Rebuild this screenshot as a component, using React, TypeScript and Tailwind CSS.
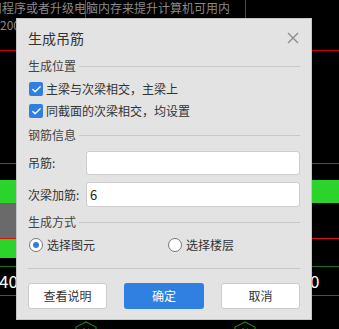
import { Check } from "lucide-react";

const font = { fontFamily: '"Noto Sans CJK SC", "Noto Sans", sans-serif' };

function SectionHeader({ title }: { title: string }) {
  return (
    <div className="flex h-[18px] items-center">
      <span className="text-[12px] text-[#444]">{title}</span>
      <div className="ml-[3px] h-px flex-1 bg-[#c9c9c9]" />
    </div>
  );
}

function CheckRow({ label }: { label: string }) {
  return (
    <div className="flex h-[22px] items-center pl-px">
      <span className="flex h-[14px] w-[14px] items-center justify-center rounded-[2px] bg-[#2f7fe2]">
        <Check className="h-[11px] w-[11px] text-white" strokeWidth={3} />
      </span>
      <span className="ml-[3px] text-[12px] text-[#333]">{label}</span>
    </div>
  );
}

function Radio({ label, checked }: { label: string; checked?: boolean }) {
  return (
    <div className="flex items-center">
      <span className="flex h-[14px] w-[14px] items-center justify-center rounded-full border border-[#777] bg-white">
        {checked && <span className="h-[6px] w-[6px] rounded-full bg-[#2f7fe2]" />}
      </span>
      <span className="ml-[4px] text-[12px] text-[#333]">{label}</span>
    </div>
  );
}

function Field({ label, value, h }: { label: string; value: string; h: string }) {
  return (
    <div className="flex items-center">
      <span className="w-[58px] text-[12px] text-[#333]">{label}</span>
      <div
        className={`flex flex-1 items-center rounded-[3px] border border-[#cdcdcd] bg-white pl-[3px] text-[13px] text-[#222] ${h}`}
      >
        {value}
      </div>
    </div>
  );
}

function Hexagon({ left }: { left: number }) {
  return (
    <svg
      className="absolute top-[321px]"
      style={{ left: left - 12 }}
      width="24"
      height="12"
      viewBox="0 0 24 12"
    >
      <path d="M2 12 L2 6 L12 1 L22 6 L22 12" fill="none" stroke="#1f7a1f" strokeWidth="1.2" />
      <path d="M9 8 h2 M14 8 h1" stroke="#666" strokeWidth="1" />
    </svg>
  );
}

export default function App() {
  return (
    <div className="relative h-[329px] w-[339px] overflow-hidden bg-black" style={font}>
      {/* CAD canvas behind the dialog */}
      <div className="absolute left-[-10px] top-[-1px] whitespace-nowrap text-[12px] text-[#8a8a8a]">
        用程序或者升级电脑内存来提升计算机可用内
      </div>
      <div className="absolute left-0 top-[16px] text-[12px] text-[#8a8a8a]">200</div>
      <div className="absolute left-[85px] top-0 h-[20px] w-px bg-[#d11]" />
      <div className="absolute left-[245px] top-0 h-[20px] w-px bg-[#d11]" />
      <div className="absolute left-0 top-[50px] h-px w-full bg-[#c00]" />
      <div className="absolute left-0 top-[163px] h-px w-full bg-[#d11]" />
      <div className="absolute left-0 top-[180px] h-[23px] w-full bg-[#2bd42b]" />
      <div className="absolute left-0 top-[203px] h-[35px] w-[20px] bg-[#6a6a6a]" />
      <div className="absolute left-0 top-[238px] h-px w-full bg-[#d11]" />
      <div className="absolute left-0 top-[239px] h-[19px] w-[20px] bg-[#2bd42b]" />
      <div className="absolute left-0 top-[266px] h-px w-full bg-[#1c6e1c]" />
      <div className="absolute left-0 top-[295px] h-px w-full bg-[#1c6e1c]" />
      <div className="absolute left-[-1px] top-[268px] text-[17px] text-white">40</div>
      <div className="absolute left-[310px] top-[268px] text-[17px] text-white">0</div>
      <Hexagon left={86} />
      <Hexagon left={245} />

      {/* Dialog */}
      <div className="absolute left-[16px] top-[18px] flex w-[296px] flex-col border border-[#c6c6c6] bg-[#e3e3e3] px-[11px] pb-[10px]">
        <div className="flex h-[38px] items-center justify-between">
          <span className="text-[14px] text-[#333]">生成吊筋</span>
          <svg width="12" height="12" viewBox="0 0 12 12" className="mr-[1px]">
            <path d="M1 1 L11 11 M11 1 L1 11" stroke="#8a8a8a" strokeWidth="1.3" />
          </svg>
        </div>
        <SectionHeader title="生成位置" />
        <div className="mt-[3px]">
          <CheckRow label="主梁与次梁相交，主梁上" />
          <CheckRow label="同截面的次梁相交，均设置" />
        </div>
        <div className="mt-[4px]">
          <SectionHeader title="钢筋信息" />
        </div>
        <div className="mt-[7px] flex flex-col gap-[7px]">
          <Field label="吊筋:" value="" h="h-[24px]" />
          <Field label="次梁加筋:" value="6" h="h-[25px]" />
        </div>
        <div className="mt-[6px]">
          <SectionHeader title="生成方式" />
        </div>
        <div className="mt-[3px] flex h-[22px] items-center pl-px">
          <div className="w-[139px]">
            <Radio label="选择图元" checked />
          </div>
          <Radio label="选择楼层" />
        </div>
        <div className="mt-[12px] h-px bg-[#c9c9c9]" />
        <div className="mt-[14px] flex h-[26px] justify-between">
          <button
            type="button"
            className="w-[79px] rounded-[3px] border border-[#cdcdcd] bg-white text-[12px] text-[#333]"
          >
            查看说明
          </button>
          <button
            type="button"
            className="w-[80px] rounded-[3px] bg-[#2f80e0] text-[12px] text-white"
          >
            确定
          </button>
          <button
            type="button"
            className="w-[79px] rounded-[3px] border border-[#cdcdcd] bg-white text-[12px] text-[#333]"
          >
            取消
          </button>
        </div>
      </div>
    </div>
  );
}
